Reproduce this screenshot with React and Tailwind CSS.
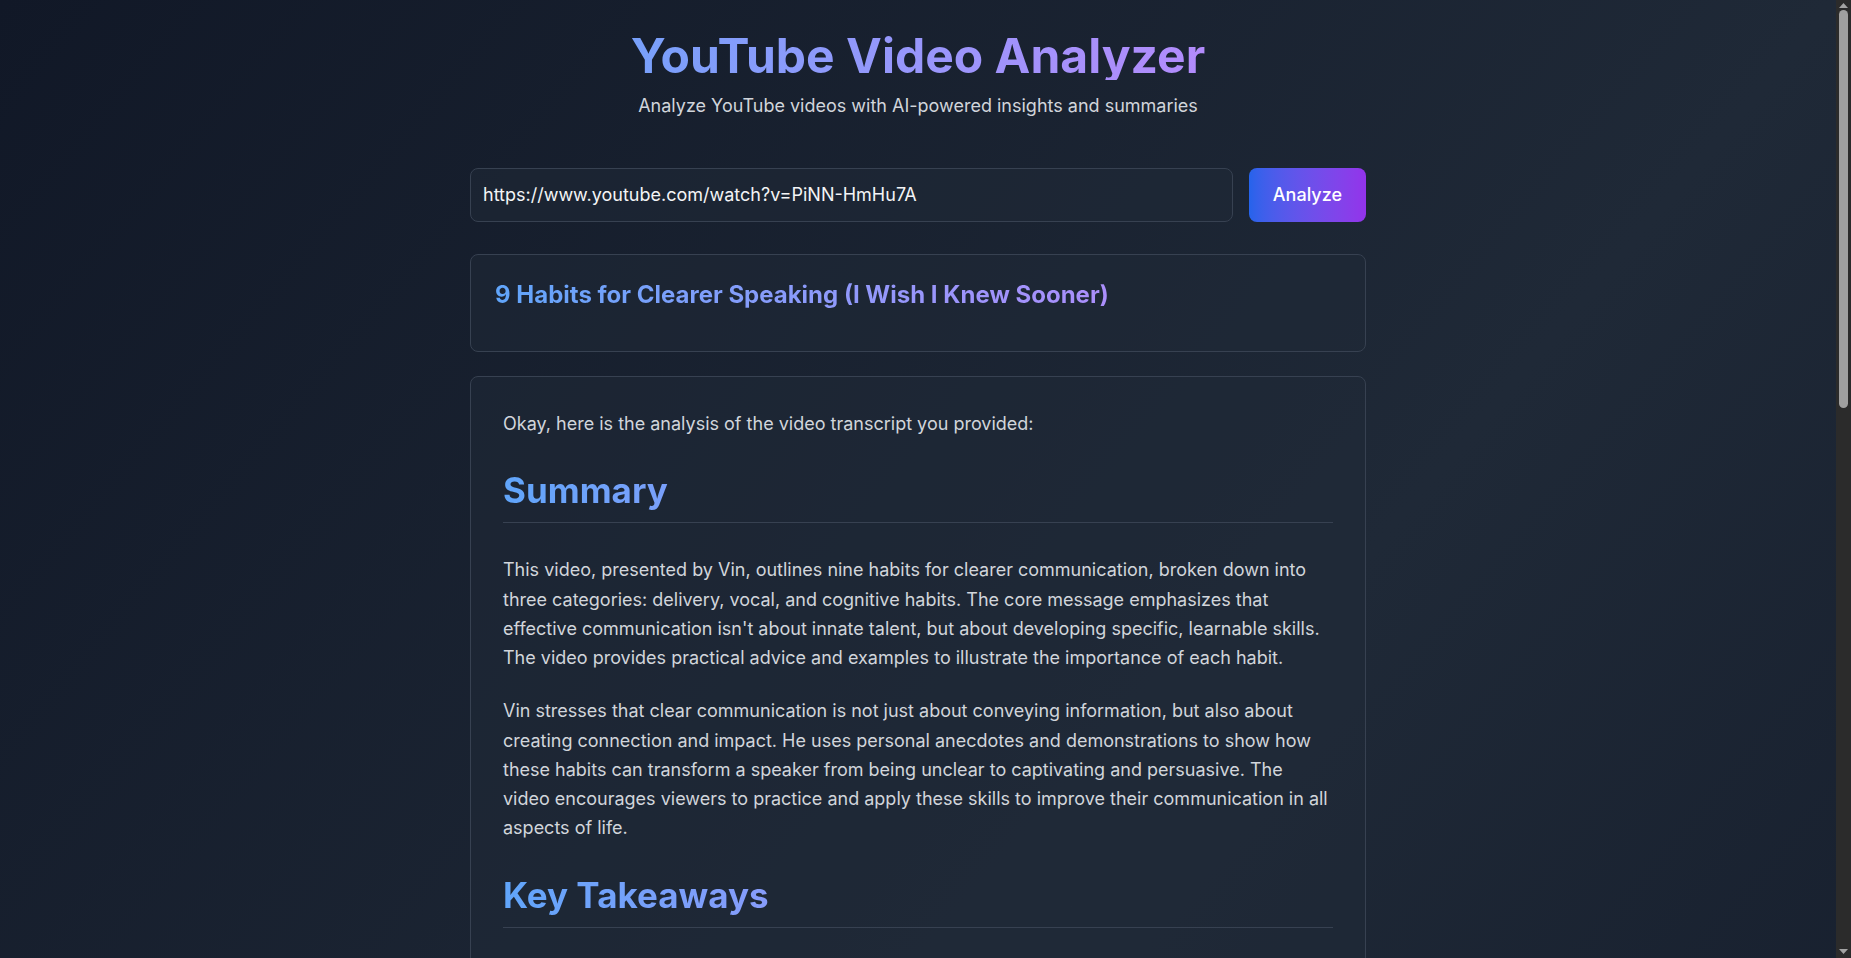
import React, { useState } from 'react';

const takeaways = [
  { label: 'Slow down your pace:', text: 'Speaking too fast makes it hard for listeners to follow. Deliberate pacing gives your words weight and lets key ideas land.' },
  { label: 'Use strategic pauses:', text: 'Pauses replace filler words, add emphasis, and give the audience a moment to process what was just said.' },
  { label: 'Maintain eye contact:', text: 'Looking at your listeners builds trust and keeps them engaged with your message.' },
  { label: 'Project your voice:', text: 'Speaking from the diaphragm with adequate volume signals confidence and makes you easier to hear.' },
  { label: 'Vary your tone:', text: 'A monotone delivery loses attention quickly. Changing pitch and intonation keeps the message lively.' },
  { label: 'Articulate clearly:', text: 'Pronouncing each word fully, especially the endings, prevents mumbling and misunderstanding.' },
  { label: 'Know your main point:', text: 'Clear speaking starts with clear thinking. Decide on the one idea you want the listener to remember.' },
  { label: 'Structure your thoughts:', text: 'Simple frameworks such as point, reason, example, point help organize ideas on the spot.' },
  { label: 'Be concise:', text: 'Cutting unnecessary words and tangents makes your message sharper and more memorable.' },
];

const quotes = [
  '"Clear communication is not a talent you are born with, it is a skill you build."',
  '"The pause is the most powerful tool in a speaker\'s toolbox."',
  '"If you can\'t explain it simply, you probably haven\'t thought it through."',
];

const Heading = ({ children }) => (
  <h2 className="mt-8 mb-8 pb-3 border-b border-[#374151] text-[35px] leading-10 font-bold bg-gradient-to-r from-[#60a5fa] to-[#c084fc] bg-clip-text text-transparent">
    {children}
  </h2>
);

const Para = ({ children }) => (
  <p className="mb-6 text-lg leading-relaxed text-[#d1d5db]">{children}</p>
);

// browser-style scrollbar strip on the right edge
const ScrollStrip = () => (
  <div className="w-[15px] shrink-0 h-screen bg-[#2b2b2b] flex flex-col items-center pt-[3px] pb-[4px]">
    <svg width="9" height="5" viewBox="0 0 9 5">
      <path d="M0 5 L4.5 0 L9 5 Z" fill="#a3a3a3" />
    </svg>
    <div className="mt-[2px] w-[9px] h-[398px] rounded-full bg-[#9f9f9f]" />
    <div className="flex-1" />
    <svg width="9" height="5" viewBox="0 0 9 5">
      <path d="M0 0 L9 0 L4.5 5 Z" fill="#a3a3a3" />
    </svg>
  </div>
);

export default function App() {
  const [url, setUrl] = useState('https://www.youtube.com/watch?v=PiNN-HmHu7A');

  return (
    <div className="flex h-screen overflow-hidden font-['Inter','Noto_Sans',sans-serif]">
      <div className="flex-1 h-screen overflow-y-auto [scrollbar-width:none]">
        <div className="min-h-full bg-gradient-to-br from-[#111827] via-[#1f2937] to-[#111827] px-4 pt-8 pb-24">
          <div className="max-w-4xl mx-auto">
            <header className="text-center mb-12">
              <h1 className="text-5xl leading-none font-bold mb-3 bg-gradient-to-r from-[#60a5fa] to-[#c084fc] bg-clip-text text-transparent">
                YouTube Video Analyzer
              </h1>
              <p className="text-lg text-[#d1d5db]">Analyze YouTube videos with AI-powered insights and summaries</p>
            </header>

            <div className="flex gap-4 mb-8">
              <input
                type="text"
                value={url}
                onChange={(e) => setUrl(e.target.value)}
                className="flex-1 bg-[#1f2937]/50 border border-[#374151] rounded-lg px-3 py-3 text-lg leading-7 text-[#f3f4f6] outline-none"
              />
              <button className="px-6 rounded-lg bg-gradient-to-r from-[#2563eb] to-[#9333ea] text-white text-lg font-medium">
                Analyze
              </button>
            </div>

            <div className="bg-[#1f2937]/50 border border-[#374151] rounded-lg p-6 mb-6">
              <h2 className="text-2xl font-bold mb-4 bg-gradient-to-r from-[#60a5fa] to-[#c084fc] bg-clip-text text-transparent">
                9 Habits for Clearer Speaking (I Wish I Knew Sooner)
              </h2>
            </div>

            <div className="bg-[#1f2937]/50 border border-[#374151] rounded-lg p-8">
              <Para>Okay, here is the analysis of the video transcript you provided:</Para>

              <Heading>Summary</Heading>
              <Para>
                This video, presented by Vin, outlines nine habits for clearer communication, broken down into three categories: delivery, vocal, and cognitive habits. The core message emphasizes that effective communication isn't about innate talent, but about developing specific, learnable skills. The video provides practical advice and examples to illustrate the importance of each habit.
              </Para>
              <Para>
                Vin stresses that clear communication is not just about conveying information, but also about creating connection and impact. He uses personal anecdotes and demonstrations to show how these habits can transform a speaker from being unclear to captivating and persuasive. The video encourages viewers to practice and apply these skills to improve their communication in all aspects of life.
              </Para>

              <Heading>Key Takeaways</Heading>
              <ul className="mb-6 pl-6 list-disc space-y-3 text-lg leading-relaxed text-[#d1d5db] marker:text-[#60a5fa]">
                {takeaways.map((t) => (
                  <li key={t.label}>
                    <strong className="font-semibold text-[#f3f4f6]">{t.label}</strong> {t.text}
                  </li>
                ))}
              </ul>

              <Heading>Notable Quotes</Heading>
              <div className="mb-6 space-y-4">
                {quotes.map((q) => (
                  <blockquote key={q} className="border-l-4 border-[#60a5fa] pl-4 italic text-lg leading-relaxed text-[#d1d5db]">
                    {q}
                  </blockquote>
                ))}
              </div>

              <Heading>Conclusion</Heading>
              <Para>
                The video offers a practical roadmap for anyone who wants to speak more clearly. By working on delivery, voice and thinking habits one at a time, viewers can steadily become more confident and persuasive communicators in meetings, presentations and everyday conversations.
              </Para>
            </div>
          </div>
        </div>
      </div>
      <ScrollStrip />
    </div>
  );
}
